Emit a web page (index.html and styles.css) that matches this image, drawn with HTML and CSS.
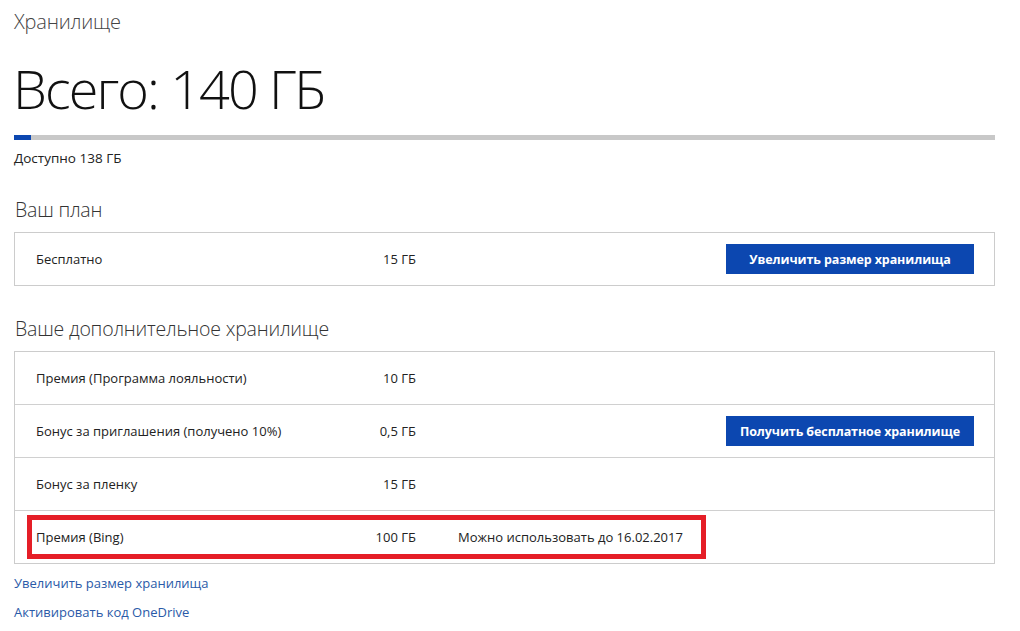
FILE: index.html
```html
<!DOCTYPE html>
<html lang="ru">
<head>
<meta charset="utf-8">
<title>Хранилище</title>
<link rel="stylesheet" href="styles.css">
</head>
<body>
<div class="page">
  <div class="crumb">Хранилище</div>
  <h1 class="total">Всего: 140 ГБ</h1>
  <div class="meter"><div class="meter-fill" style="width:17px"></div></div>
  <div class="avail">Доступно 138 ГБ</div>

  <h2 class="section">Ваш план</h2>
  <div class="box">
    <div class="row">
      <span class="label">Бесплатно</span>
      <span class="value">15 ГБ</span>
      <span class="note"></span>
      <button class="btn">Увеличить размер хранилища</button>
    </div>
  </div>

  <h2 class="section section-2">Ваше дополнительное хранилище</h2>
  <div class="box">
    <div class="row">
      <span class="label">Премия (Программа лояльности)</span>
      <span class="value">10 ГБ</span>
    </div>
    <div class="row">
      <span class="label">Бонус за приглашения (получено 10%)</span>
      <span class="value">0,5 ГБ</span>
      <span class="note"></span>
      <button class="btn">Получить бесплатное хранилище</button>
    </div>
    <div class="row">
      <span class="label">Бонус за пленку</span>
      <span class="value">15 ГБ</span>
    </div>
    <div class="row row-marked">
      <span class="label">Премия (Bing)</span>
      <span class="value">100 ГБ</span>
      <span class="note">Можно использовать до 16.02.2017</span>
      <div class="highlight"></div>
    </div>
  </div>

  <div class="links">
    <a class="link" href="#">Увеличить размер хранилища</a>
    <a class="link" href="#">Активировать код OneDrive</a>
  </div>
</div>
</body>
</html>
```

FILE: styles.css
```css
html, body {
  margin: 0;
  padding: 0;
  background: #ffffff;
}

body {
  font-family: "Segoe UI", "Open Sans", "Noto Sans", sans-serif;
  color: #222222;
}

.page {
  width: 981px;
  padding: 8px 0 0 14px;
}

.crumb {
  font-size: 20px;
  font-weight: 300;
  line-height: 28px;
  color: #444444;
  letter-spacing: -0.2px;
}

.total {
  margin: 16px 0 0 -1px;
  font-size: 54px;
  font-weight: 300;
  line-height: 72px;
  color: #111111;
  letter-spacing: -1.9px;
}

.meter {
  margin-top: 11px;
  height: 5px;
  background: #c8c8c8;
}

.meter-fill {
  height: 100%;
  background: #0c47b0;
}

.avail {
  margin-top: 10px;
  font-size: 13.5px;
  line-height: 16px;
  color: #222222;
}

.section {
  margin: 30px 0 0 1px;
  font-size: 19.5px;
  font-weight: 300;
  line-height: 28px;
  color: #333333;
  letter-spacing: -0.2px;
}

.section-2 {
  margin-top: 29px;
}

.box {
  margin-top: 8px;
  border: 1px solid #cccccc;
}

.row {
  position: relative;
  display: flex;
  align-items: center;
  height: 52px;
  padding: 0 20px 0 21px;
  font-size: 13px;
  color: #222222;
}

.row + .row {
  border-top: 1px solid #d0d0d0;
}

.label {
  width: 320px;
}

.value {
  width: 60px;
  text-align: right;
}

.note {
  margin-left: 42px;
}

.btn {
  margin-left: auto;
  width: 248px;
  height: 30px;
  border: 0;
  background: #0c47b0;
  color: #ffffff;
  font-family: inherit;
  font-size: 12.5px;
  font-weight: 700;
  letter-spacing: -0.1px;
  padding: 0;
}

.highlight {
  position: absolute;
  left: 12px;
  top: 4px;
  width: 679px;
  height: 44px;
  box-sizing: border-box;
  border: 5px solid #e51e27;
  pointer-events: none;
}

.links {
  display: flex;
  flex-direction: column;
  align-items: flex-start;
  gap: 10px;
  margin-top: 10px;
}

.link {
  font-size: 13px;
  line-height: 19px;
  color: #2a5aa8;
  text-decoration: none;
}
```
